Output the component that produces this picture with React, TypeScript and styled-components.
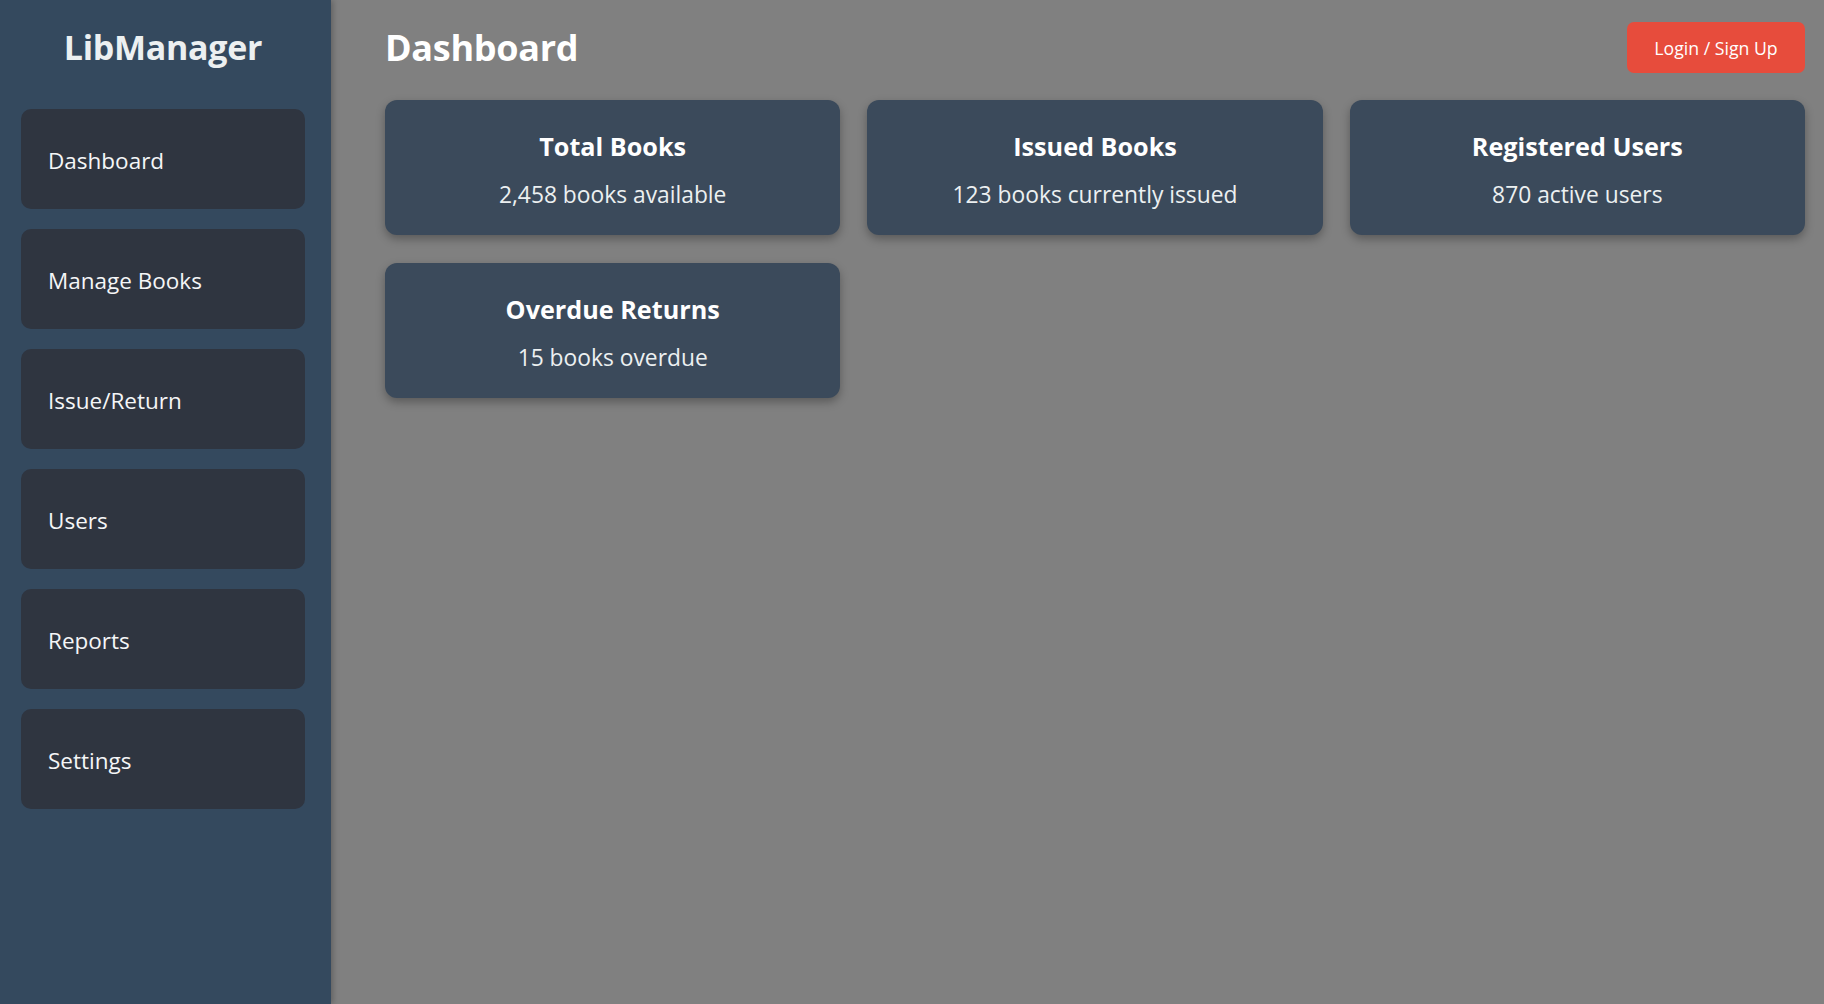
import React from "react";
import styled, { createGlobalStyle } from "styled-components";

const GlobalStyle = createGlobalStyle`
  html, body {
    margin: 0;
    padding: 0;
    background: #808080;
    font-family: "Open Sans", "Noto Sans", "Liberation Sans", sans-serif;
  }
  * { box-sizing: border-box; }
`;

const Layout = styled.div`
  display: flex;
  min-height: 100vh;
`;

const Sidebar = styled.aside`
  width: 331px;
  flex-shrink: 0;
  background: #34495e;
  padding: 18px 26px 18px 21px;
  display: flex;
  flex-direction: column;
  gap: 20px;
  box-shadow: 2px 0 6px rgba(0, 0, 0, 0.25);
  position: relative;
  z-index: 1;
`;

const Brand = styled.h2`
  margin: 0 0 13px;
  text-align: center;
  color: #ecf0f1;
  font-size: 34px;
  font-weight: 700;
  line-height: 58px;
  letter-spacing: -0.3px;
`;

const NavItem = styled.a`
  display: flex;
  align-items: center;
  height: 100px;
  padding: 2px 27px 0;
  background: #2f3540;
  border-radius: 10px;
  color: #f5f6f7;
  font-size: 22.5px;
  text-decoration: none;
  cursor: pointer;
`;

const Main = styled.main`
  flex: 1;
  padding: 22px 19px 20px 54px;
  display: flex;
  flex-direction: column;
  gap: 27px;
`;

const Header = styled.header`
  display: flex;
  align-items: center;
  justify-content: space-between;
  height: 51px;
`;

const Title = styled.h1`
  margin: 0;
  color: #ffffff;
  font-size: 36px;
  font-weight: 700;
  letter-spacing: -0.3px;
`;

const LoginButton = styled.button`
  width: 178px;
  height: 51px;
  border: none;
  border-radius: 7px;
  background: #e74c3c;
  color: #ffffff;
  font-family: inherit;
  font-size: 17.7px;
  cursor: pointer;
`;

const CardGrid = styled.section`
  display: grid;
  grid-template-columns: repeat(3, 1fr);
  column-gap: 27px;
  row-gap: 28px;
`;

const Card = styled.div`
  height: 135px;
  padding-top: 6px;
  background: #3b4a5b;
  border-radius: 12px;
  box-shadow: 0 4px 10px rgba(0, 0, 0, 0.3);
  display: flex;
  flex-direction: column;
  align-items: center;
  justify-content: center;
  text-align: center;
  color: #ffffff;
`;

const CardTitle = styled.h3`
  margin: 0 0 18px;
  font-size: 25.2px;
  font-weight: 700;
  line-height: 1.25;
`;

const CardText = styled.p`
  margin: 0;
  font-size: 22.8px;
  line-height: 1.3;
  color: #ecf0f1;
`;

const navItems = ["Dashboard", "Manage Books", "Issue/Return", "Users", "Reports", "Settings"];

const stats = [
  { title: "Total Books", text: "2,458 books available" },
  { title: "Issued Books", text: "123 books currently issued" },
  { title: "Registered Users", text: "870 active users" },
  { title: "Overdue Returns", text: "15 books overdue" },
];

export default function App() {
  return (
    <>
      <GlobalStyle />
      <Layout>
        <Sidebar>
          <Brand>LibManager</Brand>
          {navItems.map((item) => (
            <NavItem key={item}>{item}</NavItem>
          ))}
        </Sidebar>
        <Main>
          <Header>
            <Title>Dashboard</Title>
            <LoginButton>Login / Sign Up</LoginButton>
          </Header>
          <CardGrid>
            {stats.map((s) => (
              <Card key={s.title}>
                <CardTitle>{s.title}</CardTitle>
                <CardText>{s.text}</CardText>
              </Card>
            ))}
          </CardGrid>
        </Main>
      </Layout>
    </>
  );
}
